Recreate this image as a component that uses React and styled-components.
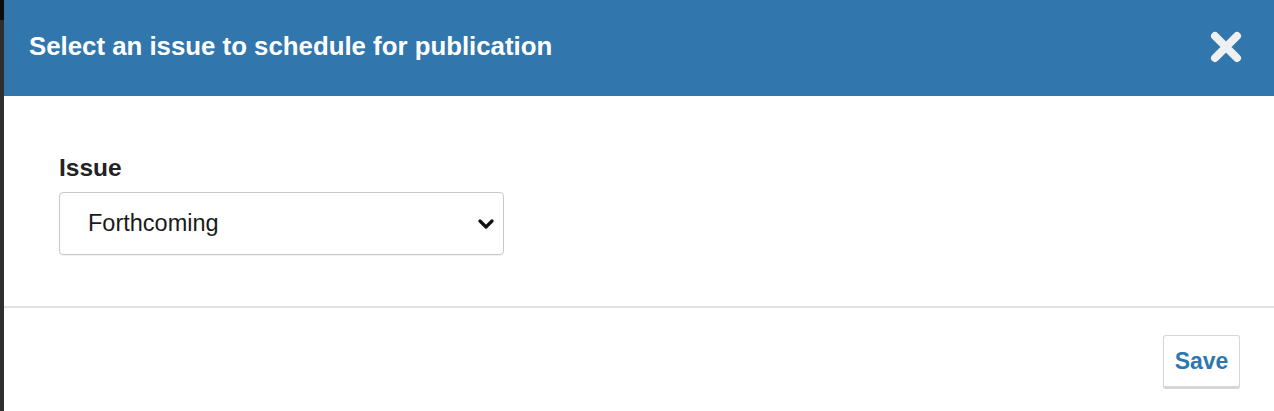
import React from "react";
import styled, { createGlobalStyle } from "styled-components";

const Global = createGlobalStyle`
  html, body { margin: 0; padding: 0; }
  body {
    background: linear-gradient(to bottom, #0d0d0d 0, #0d0d0d 20px, #2f2f2f 20px);
    font-family: "Liberation Sans", Arial, sans-serif;
    height: 411px;
    overflow: hidden;
  }
`;

const Modal = styled.div`
  margin-left: 4px;
  height: 411px;
  background: #fff;
  display: flex;
  flex-direction: column;
`;

const Header = styled.header`
  height: 96px;
  background: #3177ad;
  display: flex;
  align-items: center;
  justify-content: space-between;
  padding: 0 30px 0 25px;
  box-sizing: border-box;
`;

const Title = styled.h1`
  margin: 0;
  color: #fff;
  font-size: 25.8px;
  font-weight: 700;
  position: relative;
  top: -2px;
`;

const Close = styled.button`
  border: 0;
  background: none;
  padding: 0;
  width: 36px;
  height: 36px;
  display: flex;
  align-items: center;
  justify-content: center;
  cursor: pointer;
  position: relative;
  top: -1px;
`;

const Body = styled.div`
  padding: 59px 55px 51px;
  border-bottom: 2px solid #e2e2e2;
  display: flex;
  flex-direction: column;
`;

const Label = styled.label`
  font-size: 24.5px;
  font-weight: 700;
  color: #222;
  line-height: 26px;
  margin-bottom: 11px;
`;

const SelectBox = styled.div`
  position: relative;
  width: 445px;
  height: 63px;
  box-sizing: border-box;
  border: 1px solid #c9c9c9;
  border-radius: 4px;
  box-shadow: 0 1px 1px rgba(0,0,0,0.06);
  display: flex;
  align-items: center;
  padding-left: 28px;
  font-size: 23.5px;
  color: #1a1a1a;
`;

const Chevron = styled.svg`
  position: absolute;
  right: 9px;
  top: 50%;
  transform: translateY(-50%);
`;

const Footer = styled.footer`
  display: flex;
  justify-content: flex-end;
  padding: 27px 34px 0;
`;

const Button = styled.button`
  font-family: "Liberation Sans", Arial, sans-serif;
  width: 77px;
  height: 54px;
  background: #fff;
  color: #2e77ae;
  font-weight: 700;
  font-size: 23px;
  border: 1px solid #d6d6d6;
  border-bottom: 3px solid #d6d6d6;
  border-radius: 3px;
  padding: 0;
  cursor: pointer;
`;

export default function App() {
  return (
    <>
      <Global />
      <Modal>
        <Header>
          <Title>Select an issue to schedule for publication</Title>
          <Close aria-label="Close">
            <svg width="34" height="34" viewBox="0 0 34 34">
              <path
                d="M6 6 L28 28 M28 6 L6 28"
                stroke="#eef0f2"
                strokeWidth="8"
                strokeLinecap="round"
              />
            </svg>
          </Close>
        </Header>
        <Body>
          <Label>Issue</Label>
          <SelectBox>
            Forthcoming
            <Chevron width="16" height="12" viewBox="0 0 16 12">
              <path
                d="M2 3 L8 9 L14 3"
                fill="none"
                stroke="#111"
                strokeWidth="3.2"
                strokeLinecap="round"
                strokeLinejoin="round"
              />
            </Chevron>
          </SelectBox>
        </Body>
        <Footer>
          <Button>Save</Button>
        </Footer>
      </Modal>
    </>
  );
}
